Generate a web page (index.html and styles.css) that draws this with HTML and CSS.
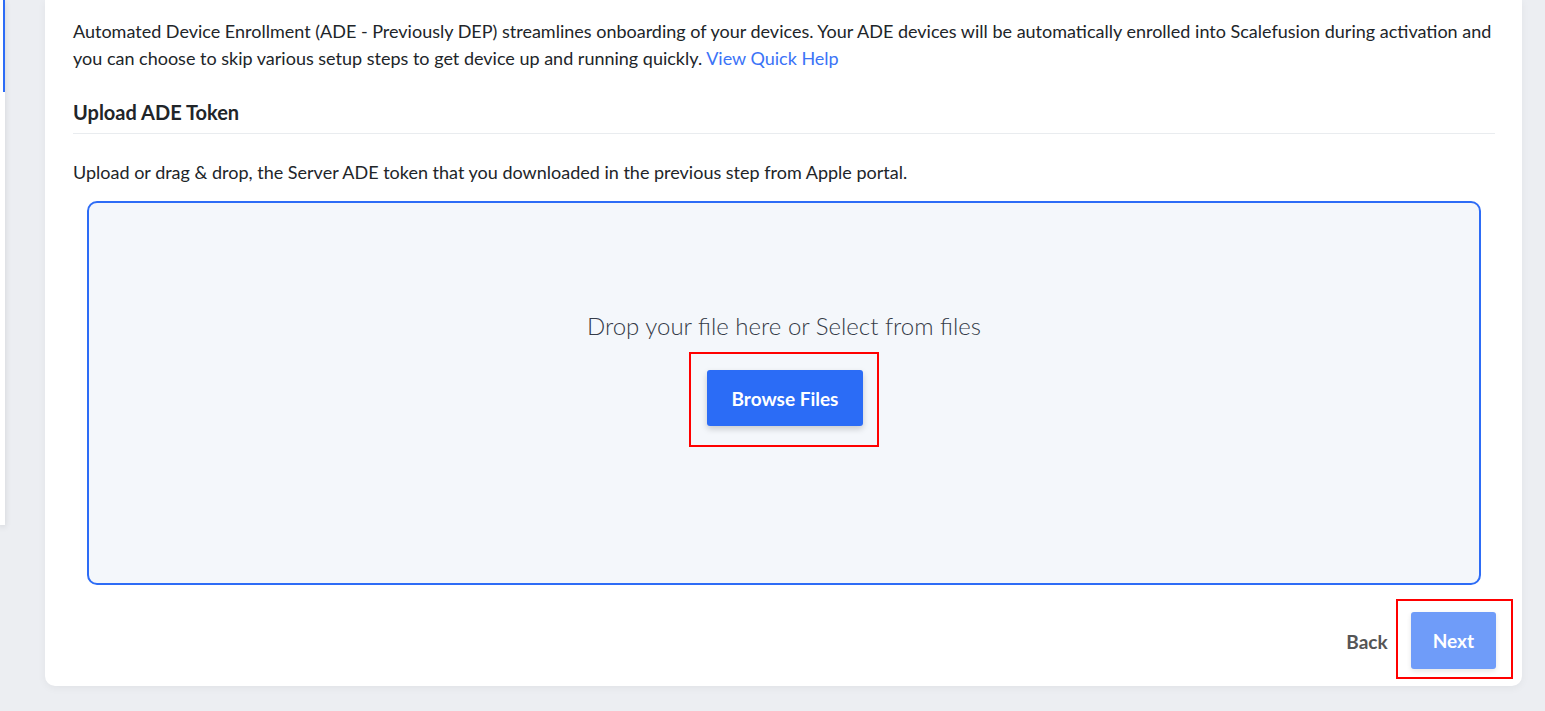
FILE: index.html
```html
<!DOCTYPE html>
<html lang="en">
<head>
    <meta charset="UTF-8">
    <meta name="viewport" content="width=device-width, initial-scale=1.0">
    <title>ADE Enrollment - Upload Token</title>
    <link rel="stylesheet" href="styles.css">
</head>
<body>
    <div class="layout">
        <aside class="side-panel">
            <span class="side-marker"></span>
        </aside>
        <main class="card">
            <p class="intro">
                Automated Device Enrollment (ADE - Previously DEP) streamlines onboarding of your devices. Your ADE devices will be automatically enrolled into Scalefusion during activation and
                you can choose to skip various setup steps to get device up and running quickly. <a href="#" class="help-link">View Quick Help</a>
            </p>
            <h3 class="section-title">Upload ADE Token</h3>
            <p class="hint">Upload or drag &amp; drop, the Server ADE token that you downloaded in the previous step from Apple portal.</p>
            <div class="drop-zone">
                <div class="drop-label">Drop your file here or Select from files</div>
                <div class="highlight">
                    <button class="btn btn-primary">Browse Files</button>
                </div>
            </div>
            <div class="actions">
                <button class="btn-link">Back</button>
                <div class="highlight highlight-next">
                    <button class="btn btn-primary btn-disabled">Next</button>
                </div>
            </div>
        </main>
    </div>
</body>
</html>
```

FILE: styles.css
```css
body
{
    margin: 0;
    font-family: Lato, "Noto Sans", sans-serif;
    background: #eceef2;
    color: #212529;
    overflow: hidden;
}
.layout
{
    display: flex;
    align-items: flex-start;
    height: 711px;
}
.side-panel
{
    width: 5px;
    height: 525px;
    background: #fff;
    box-shadow: 0 2px 6px rgba(0,0,0,0.12);
    flex-shrink: 0;
}
.side-marker
{
    display: block;
    width: 2px;
    margin-left: 3px;
    height: 92px;
    background: #2d6cf6;
}
.card
{
    margin-left: 40px;
    width: 1477px;
    height: 686px;
    box-sizing: border-box;
    padding: 18px 24px 0 28px;
    background: #fff;
    border-radius: 0 0 10px 10px;
    box-shadow: 0 2px 8px rgba(0,0,0,0.05);
    flex-shrink: 0;
}
.intro
{
    margin: 0;
    font-size: 18px;
    line-height: 27px;
}
.help-link
{
    color: #3b73f7;
    text-decoration: none;
}
.section-title
{
    margin: 28px 3px 0 0;
    padding-bottom: 9px;
    font-size: 20px;
    font-weight: 700;
    border-bottom: 1px solid #e9ecef;
}
.hint
{
    margin: 27px 0 0;
    font-size: 18px;
}
.drop-zone
{
    margin: 18px 17px 0 14px;
    height: 384px;
    box-sizing: border-box;
    border: 2px solid #2d6cf6;
    border-radius: 10px;
    background: #f4f7fb;
    display: flex;
    flex-direction: column;
    align-items: center;
    padding-top: 108px;
}
.drop-label
{
    font-size: 24px;
    font-weight: 300;
    color: #353b48;
}
.highlight
{
    margin-top: 12px;
    border: 2px solid #f00;
    padding: 16px 14px 19px 16px;
}
.btn
{
    border: none;
    border-radius: 3px;
    font-family: inherit;
    font-weight: 700;
    color: #fff;
    cursor: pointer;
}
.btn-primary
{
    background: #2b6cf6;
    height: 56px;
    padding: 0 25px;
    font-size: 19px;
    box-shadow: 0 3px 6px rgba(0,0,0,0.18);
}
.btn-disabled
{
    background: #6f9cf9;
    height: 57px;
    padding: 0 22px;
    box-shadow: 0 2px 5px rgba(0,0,0,0.1);
}
.actions
{
    display: flex;
    justify-content: flex-end;
    align-items: center;
    margin-top: 14px;
    margin-right: -15px;
}
.btn-link
{
    background: none;
    border: none;
    font-family: inherit;
    font-size: 19px;
    font-weight: 700;
    color: #555;
    padding: 0;
    margin-right: 8px;
    margin-top: 4px;
}
.highlight-next
{
    margin-top: 0;
    padding: 11px 15px 8px 13px;
}
```
